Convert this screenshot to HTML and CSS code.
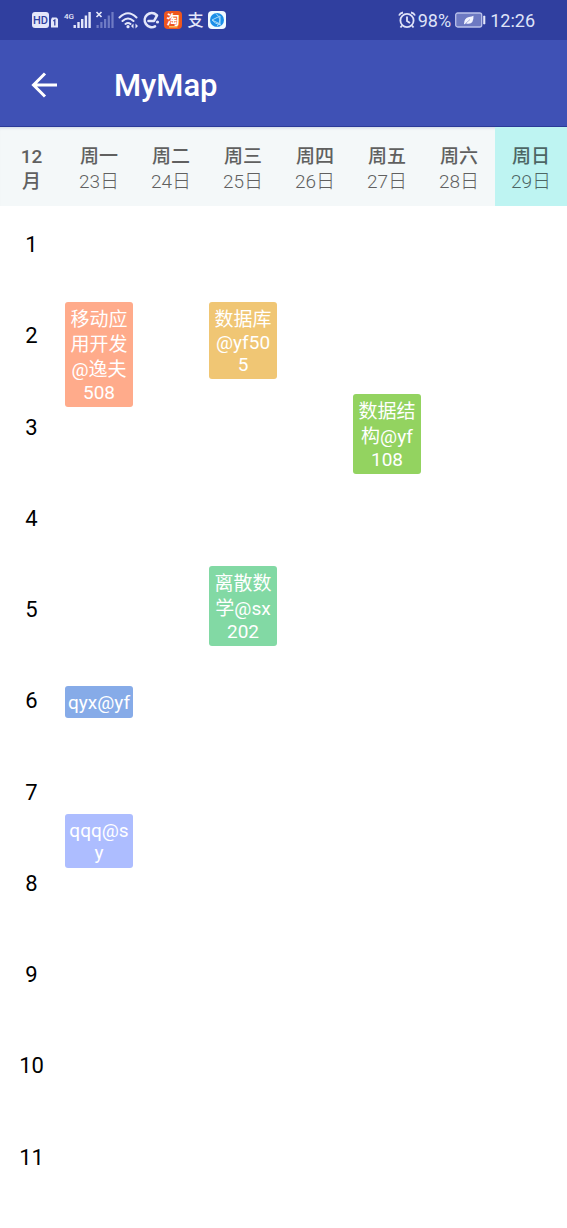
FILE: index.html
```html
<!DOCTYPE html>
<html lang="zh-CN">
<head>
<meta charset="utf-8">
<meta name="viewport" content="width=device-width, initial-scale=1">
<title>MyMap</title>
<link rel="stylesheet" href="styles.css">
</head>
<body>
<div class="status">
  <svg class="status-icons" width="200" height="24" viewBox="0 0 200 24" aria-hidden="true">
    <!-- HD and SIM badges -->
    <rect x="0" y="4" width="17" height="16" rx="3" fill="#e4e7fa"/>
    <text x="8.500" y="16" class="t-hd" text-anchor="middle">HD</text>
    <path d="M20 9.500h4.500l1.500 1.500v8.500h-7v-8z" fill="#e4e7fa"/>
    <path d="M21.300 13l1.500-1v5.500" fill="none" stroke="#303f9f" stroke-width="1.300"/>
    <!-- signal bars -->
    <text x="32" y="11" class="t-4g">4G</text>
    <g fill="#e4e7fa">
      <rect x="41.500" y="17" width="2.400" height="3"/><rect x="45.300" y="14" width="2.400" height="6"/><rect x="49" y="11" width="2.400" height="9"/><rect x="52.700" y="7.500" width="2.400" height="12.500"/><rect x="56.400" y="4" width="2.400" height="16"/>
    </g>
    <path d="M64.500 4l5 5M69.500 4l-5 5" stroke="#e4e7fa" stroke-width="1.700"/>
    <g fill="#6f7bc4">
      <rect x="64.500" y="17" width="2.200" height="3"/><rect x="68.300" y="14" width="2.200" height="6"/><rect x="72" y="11" width="2.200" height="9"/><rect x="75.700" y="7.500" width="2.200" height="12.500"/><rect x="79.400" y="4" width="2.200" height="16"/>
    </g>
    <!-- wifi -->
    <g fill="none" stroke="#e4e7fa" stroke-width="2" stroke-linecap="round">
      <path d="M87.500 9.500q8.500-8.500 17 0M90.500 13q5.500-5 11 0M93.500 16q2.500-2 5 0"/>
    </g>
    <circle cx="96" cy="18.700" r="1.600" fill="#e4e7fa"/>
    <path d="M101.500 15.500v5l-2.500-2.500zM103.500 15.500v5l2.500-2.500z" fill="#e4e7fa"/>
    <!-- browser mark -->
    <path d="M124.500 7A7 7 0 1 0 123 18.300M116.500 13h5.500l3-5.500" fill="none" stroke="#e4e7fa" stroke-width="2.600" stroke-linecap="round" stroke-linejoin="round"/>
    <circle cx="125.500" cy="14" r="1.600" fill="#e4e7fa"/>
    <!-- shopping app -->
    <rect x="132" y="3" width="18" height="18" rx="4" fill="#ee561e"/>
    <text x="141" y="15.500" class="t-tao" text-anchor="middle">淘</text>
    <path d="M137 18.800h8.500" stroke="#fbc25d" stroke-width="1.500"/>
    <!-- payment app -->
    <text x="163.500" y="18" class="t-pay" text-anchor="middle">支</text>
    <!-- globe app -->
    <rect x="176" y="3" width="18" height="18" rx="4" fill="#f2faff"/>
    <circle cx="185" cy="12" r="7" fill="#1c8fe8"/>
    <path d="M180 12l8-4v8zM184 5.500q7 6 1 13M180 12q3 4 9 5" fill="none" stroke="#a8dbfa" stroke-width="1"/>
  </svg>
  <div class="status-right">
    <svg width="18" height="18" viewBox="0 0 18 18" fill="none" stroke="#dfe3f8" stroke-width="1.800" aria-hidden="true">
      <circle cx="9" cy="9.500" r="6.600"/><path d="M9 5.500v4.500l3 2M1 4.500q1-2.500 4-3M17 4.500q-1-2.500-4-3M4 14.500l-1.500 2M14 14.500l1.500 2"/>
    </svg>
    <span class="percent">98%</span>
    <svg class="battery" width="31" height="16" viewBox="0 0 31 16" aria-hidden="true">
      <rect x="0.700" y="1" width="26" height="14" rx="2" fill="#6d79c2" stroke="#b9c1ea" stroke-width="1.300"/>
      <path d="M28.500 4h1.500v8h-1.500z" fill="#e4e7fa" stroke="#e4e7fa" stroke-width="0.600"/>
      <path d="M9 12q0-6 5-7 3-.5 4.500-1.200.3 8-5 8-1.500 0-2.500-.5l-1.300 1z" fill="#f3f5ff"/><path d="M10.500 11.500l4.500-4" stroke="#7883c8" stroke-width="0.600"/>
    </svg>
    <span>12:26</span>
  </div>
</div>
<header class="appbar">
  <button class="back" type="button" aria-label="返回">
    <svg width="28" height="28" viewBox="0 0 28 28" fill="none" stroke="#fff" stroke-width="3"><path d="M27 14H3.500M15 2.500L3.500 14l11.500 11.500"/></svg>
  </button>
  <h1 class="title">MyMap</h1>
</header>
<div class="week row">
  <div class="month"><b>12</b><b>月</b></div>
  <div class="day"><b>周一</b><span>23日</span></div>
  <div class="day"><b>周二</b><span>24日</span></div>
  <div class="day"><b>周三</b><span>25日</span></div>
  <div class="day"><b>周四</b><span>26日</span></div>
  <div class="day"><b>周五</b><span>27日</span></div>
  <div class="day"><b>周六</b><span>28日</span></div>
  <div class="day today"><b>周日</b><span>29日</span></div>
</div>
<main class="schedule row">
  <div class="hours">
    <div>1</div><div>2</div><div>3</div><div>4</div><div>5</div><div>6</div><div>7</div><div>8</div><div>9</div><div>10</div><div>11</div>
  </div>
  <div class="column">
    <div class="card coral"><span class="han">移动应</span><span class="han">用开发</span><span class="han">@逸夫</span><span>508</span></div>
    <div class="card latin blue"><span>qyx@yf</span></div>
    <div class="card latin lilac"><span>qqq@s</span><span>y</span></div>
  </div>
  <div class="column"></div>
  <div class="column">
    <div class="card amber"><span class="han">数据库</span><span>@yf50</span><span>5</span></div>
    <div class="card mint"><span class="han">离散数</span><span class="han">学@sx</span><span>202</span></div>
  </div>
  <div class="column"></div>
  <div class="column">
    <div class="card green"><span class="han">数据结</span><span class="han">构@yf</span><span>108</span></div>
  </div>
  <div class="column"></div>
  <div class="column"></div>
</main>
</body>
</html>
```
FILE: styles.css
```css
* { box-sizing: border-box; }

body {
  margin: 0;
  min-height: 100vh;
  display: flex;
  flex-direction: column;
  background: #fff;
  font-family: Roboto, "Noto Sans CJK SC", sans-serif;
}

.status {
  height: 40px;
  padding: 0 32px;
  display: flex;
  align-items: center;
  justify-content: space-between;
  background: #303f9f;
  color: #dfe3f8;
  font-size: 18px;
}

.status-right { display: flex; align-items: center; }
.percent { margin: 0 4px 0 2px; }
.battery { margin-right: 4px; }

.t-hd { font-size: 11px; font-weight: 500; fill: #303f9f; }
.t-4g { font-size: 8px; font-weight: 500; fill: #e4e7fa; }
.t-tao { font-size: 13px; font-weight: 700; fill: #fff; }
.t-pay { font-size: 16px; font-weight: 500; fill: #e4e7fa; }

.appbar {
  height: 87px;
  padding: 3px 30px 0;
  display: flex;
  align-items: center;
  gap: 56px;
  background: #3f51b5;
  border-bottom: 1px solid #2b3a98;
}

.back {
  display: flex;
  padding: 0;
  border: 0;
  background: none;
  cursor: pointer;
}

.title {
  margin: 0;
  padding-top: 2px;
  color: #fff;
  font-size: 31px;
  font-weight: 500;
  line-height: 36px;
}

.row {
  display: grid;
  grid-template-columns: 7fr repeat(7, 8fr);
}

.week {
  height: 79px;
  background: #f4f8f9;
  color: #606060;
  font-size: 19px;
  line-height: 25px;
  text-align: center;
  box-shadow: inset 0 3px 3px -2px #cdd5e4;
}

.week b { font-weight: 500; }

.month,
.day {
  display: flex;
  flex-direction: column;
  padding-top: 17px;
}

.day span { font-weight: 300; }
.today { background: #bef4f2; color: #4d6665; }

.schedule { flex: 1; }

.hours {
  display: flex;
  flex-direction: column;
  padding: 15px 0 3px;
  font-size: 22px;
  line-height: 28px;
  text-align: center;
}

.hours div { flex: 1; padding-top: 10px; }

.column { padding: 0 2px; }

.card {
  padding: 5px 0 3px;
  border-radius: 3px;
  color: #fff;
  font-size: 19px;
  line-height: 22px;
  text-align: center;
  white-space: nowrap;
}

.card span { display: block; }
.card .han { line-height: 25px; }
.card.latin { padding: 6px 0 4px; }

.coral { margin-top: 96px; background: #ffab8b; }
.blue { margin-top: 279px; background: #86abe8; }
.lilac { margin-top: 96px; background: #adbdff; }
.amber { margin-top: 96px; background: #f0c674; }
.mint { margin-top: 187px; background: #82d9a4; }
.green { margin-top: 188px; background: #93d360; }
```
